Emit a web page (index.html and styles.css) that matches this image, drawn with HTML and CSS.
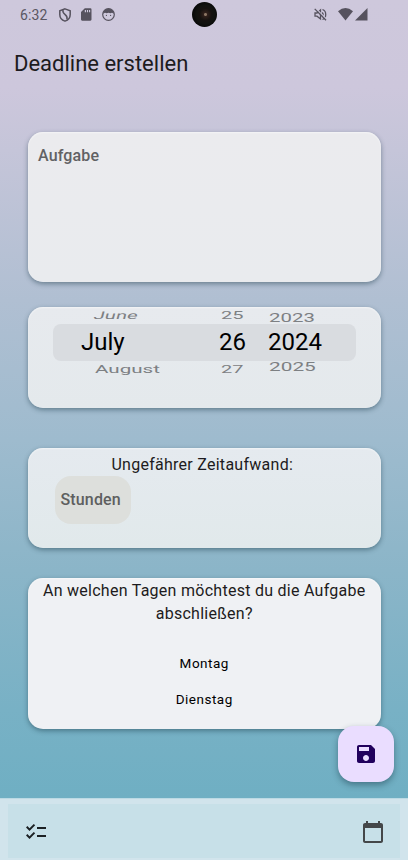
FILE: index.html
```html
<!DOCTYPE html>
<html lang="de">
<head>
<meta charset="utf-8">
<title>Deadline erstellen</title>
<link rel="stylesheet" href="styles.css">
</head>
<body>
<div class="screen">
  <header class="status">
    <span class="clock">6:32</span>
    <svg class="shield" viewBox="0 0 12 14"><path d="M6 .9 L11.2 2.7 V6.5 C11.2 9.7 8.8 12.2 6 13.1 C3.2 12.2 .8 9.7 .8 6.5 V2.7Z" fill="none" stroke="#56525e" stroke-width="1.5"/><path d="M4 2C2.8 7.2 9.2 5.6 8 11.4" fill="none" stroke="#56525e" stroke-width="1.5"/></svg>
    <svg class="sd" viewBox="0 0 11 13"><path fill="#56525e" fill-rule="evenodd" d="M4 0H9.8Q11 0 11 1.2V11.8Q11 13 9.8 13H1.2Q0 13 0 11.8V4ZM4 1.7V4.2H5.2V1.7ZM6.2 1.7V4.2H7.4V1.7ZM8.4 1.7V4.2H9.6V1.7Z"/></svg>
    <svg class="face" viewBox="0 0 13 13"><circle cx="6.5" cy="6.5" r="5.8" fill="none" stroke="#56525e" stroke-width="1.2"/><path d="M.8 5.8C1.8-.9 11.2-.9 12.2 5.8L10 4.8 8.3 5.3 6.5 4.8 4.7 5.3 3 4.8Z" fill="#56525e"/><circle cx="4.4" cy="7.4" r=".6" fill="#56525e"/><circle cx="8.6" cy="7.4" r=".6" fill="#56525e"/></svg>
    <span class="camera"></span>
    <svg class="mute" viewBox="0 0 13 13"><path d="M1 5H3L6.5 2V11L3 8.2H1Z M8.2 4.5Q10 6.5 8.2 8.6 M8.5 1.5C12.8 3 12.8 9.8 8.5 11.5" fill="none" stroke="#56525e" stroke-width="1.3"/><path d="M1.6 .2L12.9 11.6" stroke="#cec8dc" stroke-width="1.2"/><path d="M.7 .9L12 12.3" stroke="#56525e" stroke-width="1.3"/></svg>
    <svg class="wifi" viewBox="0 0 15 13"><path d="M0 3.2Q7.5-3.2 15 3.2L7.5 12.5Z" fill="#56525e"/></svg>
    <svg class="signal" viewBox="0 0 13 13"><path d="M13 0V13H0Z" fill="#56525e"/></svg>
  </header>
  <h1 class="title">Deadline erstellen</h1>
  <main class="form">
    <section class="card task"><span class="label">Aufgabe</span></section>
    <section class="card picker">
      <div class="row side above"><span class="month">June</span><span class="day">25</span><span class="year">2023</span></div>
      <div class="row selected"><span class="month">July</span><span class="day">26</span><span class="year">2024</span></div>
      <div class="row side below"><span class="month">August</span><span class="day">27</span><span class="year">2025</span></div>
    </section>
    <section class="card effort">
      <p class="question">Ungefährer Zeitaufwand:</p>
      <div class="hours">Stunden</div>
    </section>
    <section class="card days">
      <p class="question">An welchen Tagen möchtest du die Aufgabe abschließen?</p>
      <ul class="weekdays"><li>Montag</li><li>Dienstag</li></ul>
    </section>
  </main>
  <button class="fab" aria-label="Speichern"><svg viewBox="0 0 24 24"><path d="M17 3H5c-1.11 0-2 .9-2 2v14c0 1.1.89 2 2 2h14c1.1 0 2-.9 2-2V7l-4-4zm-5 16c-1.66 0-3-1.34-3-3s1.34-3 3-3 3 1.34 3 3-1.34 3-3 3zm3-10H5V5h10v4z"/></svg></button>
  <nav class="nav"><div class="nav-inner">
    <svg class="check" viewBox="0 0 24 24"><path d="M22 7h-9v2h9V7zm0 8h-9v2h9v-2zM5.54 11 2 7.46l1.41-1.41 2.12 2.12 4.24-4.24 1.41 1.41L5.54 11zm0 8L2 15.46l1.41-1.41 2.12 2.12 4.24-4.24 1.41 1.41L5.54 19z"/></svg>
    <svg class="calendar" viewBox="0 0 24 24"><path d="M20 3h-1V1h-2v2H7V1H5v2H4c-1.1 0-2 .9-2 2v16c0 1.1.9 2 2 2h16c1.1 0 2-.9 2-2V5c0-1.1-.9-2-2-2zm0 18H4V8h16v13z"/></svg>
  </div></nav>
</div>
</body>
</html>
```
FILE: styles.css
```css
* { box-sizing: border-box; }
body { margin: 0; font-family: Roboto, sans-serif; color: #1d1b20; }
svg { display: block; flex: none; }
.screen {
  position: relative; display: flex; flex-direction: column;
  width: 408px; height: 860px; overflow: hidden;
  background: linear-gradient(#cec8dc 0, #cdc7dc 88px, #c5c5d9 150px, #b0bfd2 300px, #9ebbce 440px, #8bb5c8 570px, #78b1c5 710px, #6fafc3 798px);
}
.status { display: flex; align-items: center; height: 29px; padding-left: 20px; }
.clock { width: 38.5px; font-size: 14px; letter-spacing: .1px; color: #5a5662; line-height: 29px; padding-top: 1px; }
.shield { width: 12px; height: 14px; }
.sd { width: 10.5px; height: 13px; margin-left: 10.5px; }
.face { width: 13px; height: 13px; margin-left: 10.5px; }
.camera { width: 25px; height: 25px; margin-left: 77px; border-radius: 50%; background: radial-gradient(circle at 54% 50%, #8a7462 0 1px, #30201b 2px, #15110f 6px, #11120f 9px, #080808 13px); }
.mute { width: 13px; height: 13px; margin-left: 97px; }
.wifi { width: 15px; height: 13px; margin-left: 11px; }
.signal { width: 12.5px; height: 12.5px; margin-left: 2px; }
.title { margin: 0; padding: 20px 0 0 14px; font-size: 22px; line-height: 29px; font-weight: 400; white-space: nowrap; }
.form { padding: 54px 27.5px 0 28px; }
.card { border-radius: 15px; box-shadow: 0 2px 5px rgba(20,50,65,.45), inset 0 1px 2px rgba(255,255,255,.5); overflow: hidden; }
.task { height: 150px; margin-bottom: 25px; padding: 13px 10px; background: linear-gradient(#ebebee, #e9ebee); }
.label { font-size: 16px; font-weight: 500; line-height: 22px; letter-spacing: .15px; color: #616164; }
.picker { height: 100.5px; margin-bottom: 40.5px; background: linear-gradient(#e7eaee, #e4e9ec); }
.row { display: grid; grid-template-columns: 138px 49px 1fr; padding-left: 28px; }
.row span { white-space: nowrap; transform-origin: 0 50%; }
.selected { height: 36.5px; margin: 0 25px; border-radius: 8px; background: #d9dce0; color: #000; font-size: 24px; line-height: 37px; }
.side { height: 17px; padding-left: 66px; grid-template-columns: 127px 48px 1fr; color: #7d8083; font-size: 20px; line-height: 17px; }
.side span { transform: scaleY(.56); }
.above .year { transform: translateY(2px) scale(1.02, .64); }
.above .month { transform: skewX(-15deg) scaleY(.53); }
.below { line-height: 15px; }
.below .month { transform: translateX(1px) scale(1.03, .56); }
.below .year { transform: translateY(-2px) scale(1.04, .64); }
.effort { height: 100px; margin-bottom: 30px; background: linear-gradient(#e5eaef, #e1e9eb); }
.question { margin: 0; font-size: 16px; line-height: 24px; letter-spacing: .27px; text-align: center; }
.effort .question { padding: 5px 4px 0 0; line-height: 23px; }
.hours { width: 76px; height: 48px; margin-left: 27px; padding-left: 5.5px; border-radius: 16px; background: #dddfdc; color: #5e5f60; font-size: 16px; font-weight: 500; letter-spacing: .15px; line-height: 48px; }
.days { height: 151px; background: #eff1f4; }
.days .question { padding-top: 1px; line-height: 23px; }
.weekdays { margin: 21px 0 0; padding: 0; list-style: none; text-align: center; color: #000; font-size: 13.5px; letter-spacing: .5px; }
.weekdays li { height: 36px; line-height: 35px; }
.fab { position: absolute; right: 13.6px; bottom: 78px; display: grid; place-items: center; width: 56px; height: 56px; padding: 0; border: 0; border-radius: 16px; background: #eaddff; box-shadow: 0 3px 6px rgba(20,50,65,.45); }
.fab svg { width: 24px; height: 24px; fill: #21005d; }
.nav { height: 62px; margin-top: auto; padding: 5px 8px 3px; background: #d1e4ec; border-top: 1px solid #bcdae4; }
.nav-inner { display: flex; justify-content: space-between; align-items: center; height: 54px; padding: 2px 15.5px 0 16px; background: #c7e0e8; }
.nav svg { width: 24px; height: 24px; }
.check { fill: #1b2023; }
.calendar { fill: #444749; }
```
